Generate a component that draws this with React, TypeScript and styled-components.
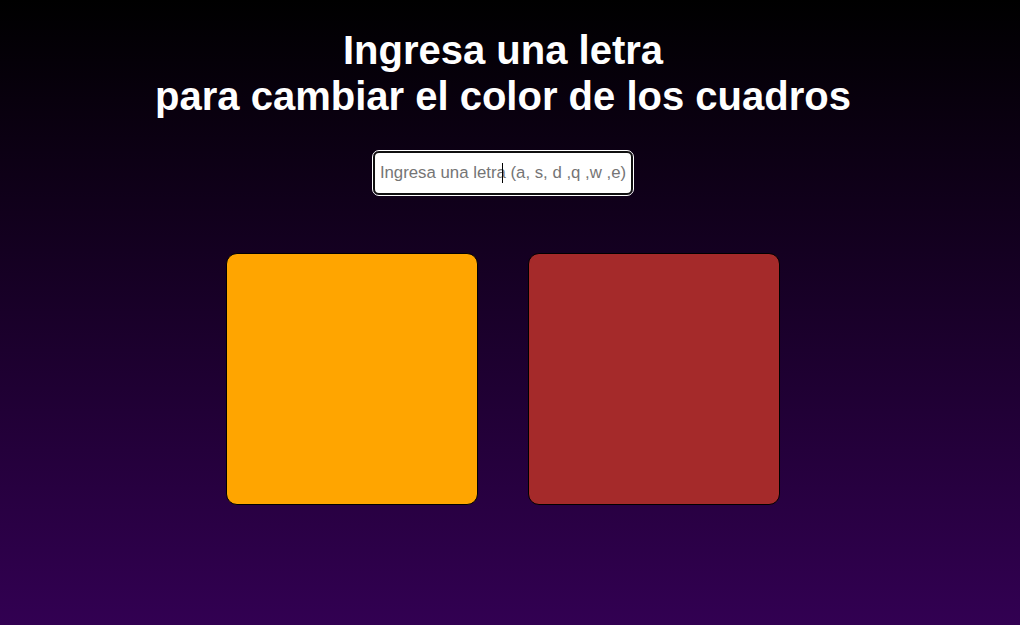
import React, { useState } from "react";
import styled, { createGlobalStyle } from "styled-components";

const GlobalStyle = createGlobalStyle`
  html, body {
    margin: 0;
    padding: 0;
  }
  body {
    font-family: "Liberation Sans", Arial, sans-serif;
  }
`;

const Page = styled.div`
  min-height: 100vh;
  box-sizing: border-box;
  background: linear-gradient(180deg, #000000 0%, #320052 100%);
  display: flex;
  flex-direction: column;
  align-items: center;
  padding: 27px 14px 0 0;
`;

const Title = styled.h1`
  margin: 0;
  color: #ffffff;
  font-family: "Liberation Sans", Arial, sans-serif;
  font-size: 40px;
  font-weight: 700;
  line-height: 46px;
  text-align: center;
`;

const InputWrap = styled.div`
  position: relative;
  margin-top: 32px;
`;

const LetterInput = styled.input`
  display: block;
  box-sizing: border-box;
  width: 260px;
  height: 44px;
  padding: 0 1px;
  border: 2px solid #101010;
  border-radius: 6px;
  outline: 1px solid #ffffff;
  background: #ffffff;
  font-family: "Liberation Sans", Arial, sans-serif;
  font-size: 16.8px;
  color: #222;
  text-align: center;
  caret-color: transparent;

  &::placeholder {
    color: #757575;
  }
`;

const Caret = styled.span`
  position: absolute;
  left: 129px;
  top: 12px;
  width: 1px;
  height: 20px;
  background: #000;
  pointer-events: none;
`;

const Row = styled.div`
  margin-top: 58px;
  display: flex;
  gap: 50px;
`;

const Square = styled.div<{ $color: string }>`
  box-sizing: border-box;
  width: 252px;
  height: 252px;
  border: 1px solid #000;
  border-radius: 11px;
  background: ${(p) => p.$color};
`;

const palette: Record<string, [string, string]> = {
  a: ["red", "blue"],
  s: ["green", "yellow"],
  d: ["purple", "pink"],
  q: ["orange", "brown"],
  w: ["teal", "navy"],
  e: ["gray", "olive"],
};

export default function App() {
  const [colors, setColors] = useState<[string, string]>(["#FFA500", "#A52A2A"]);
  const [value, setValue] = useState("");

  const onChange = (e: React.ChangeEvent<HTMLInputElement>) => {
    const v = e.target.value.toLowerCase();
    const c = palette[v.slice(-1)];
    if (c) setColors(c);
    setValue("");
  };

  return (
    <>
      <GlobalStyle />
      <Page>
        <Title>
          Ingresa una letra
          <br />
          para cambiar el color de los cuadros
        </Title>
        <InputWrap>
          <LetterInput
            autoFocus
            value={value}
            onChange={onChange}
            placeholder="Ingresa una letra (a, s, d ,q ,w ,e)"
          />
          {value === "" && <Caret />}
        </InputWrap>
        <Row>
          <Square $color={colors[0]} />
          <Square $color={colors[1]} />
        </Row>
      </Page>
    </>
  );
}
